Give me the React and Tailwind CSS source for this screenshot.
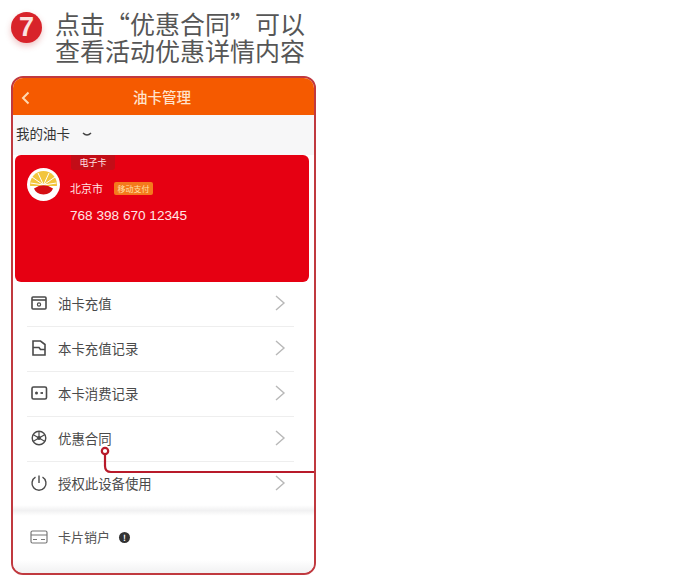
import React from "react";

const cjk = { fontFamily: '"Noto Sans CJK SC","Liberation Sans",sans-serif' };

const Chevron = () => (
  <svg width="12" height="18" viewBox="0 0 12 18" fill="none" className="ml-auto mr-[8px] shrink-0">
    <path d="M2 2 L10 9 L2 16" stroke="#b8b8b8" strokeWidth="1.4" />
  </svg>
);

const IconWallet = () => (
  <svg width="18" height="18" viewBox="0 0 18 18" fill="none" stroke="#4a4a4a" strokeWidth="1.6">
    <rect x="2" y="3" width="14" height="12" rx="1" />
    <path d="M2 6 H16" />
    <circle cx="9" cy="10.5" r="1.6" strokeWidth="1.2" />
  </svg>
);
const IconDoc = () => (
  <svg width="18" height="18" viewBox="0 0 18 18" fill="none" stroke="#4a4a4a" strokeWidth="1.6">
    <path d="M3 2 H10.5 L15 5.5 V16 H3 Z" />
    <path d="M3 8.5 H9 L10.5 10.5 H15" />
  </svg>
);
const IconBill = () => (
  <svg width="18" height="18" viewBox="0 0 18 18" fill="none" stroke="#4a4a4a" strokeWidth="1.6">
    <rect x="2" y="3" width="14.5" height="12" rx="1.5" />
    <circle cx="6.5" cy="9" r="1.5" fill="#4a4a4a" stroke="none" />
    <path d="M10.5 9 H13" strokeWidth="1.8" />
  </svg>
);
const IconFlower = () => (
  <svg width="18" height="18" viewBox="0 0 18 18" fill="none" stroke="#4a4a4a" strokeWidth="1.4">
    <circle cx="9" cy="9" r="6.8" />
    <circle cx="9" cy="9" r="2" fill="#4a4a4a" stroke="none" />
    <path d="M9 2.2 L9 9 L15 12.5 M9 9 L3 12.5 M3 5.5 L9 9 L15 5.5" strokeWidth="1.2" />
  </svg>
);
const IconPower = () => (
  <svg width="18" height="18" viewBox="0 0 18 18" fill="none" stroke="#4a4a4a" strokeWidth="1.4">
    <path d="M5.5 3.2 A7 7 0 1 0 12.5 3.2" />
    <path d="M9 1.5 V9" />
  </svg>
);
const IconCard = () => (
  <svg width="18" height="14" viewBox="0 0 18 14" fill="none" stroke="#777" strokeWidth="1.2">
    <rect x="1" y="1" width="16" height="12" rx="1.5" />
    <path d="M1 5 H17" />
    <path d="M3 9.5 H7 M11 9.5 H15" />
  </svg>
);

const Logo = () => (
  <svg width="33" height="33" viewBox="0 0 33 33" className="shrink-0">
    <circle cx="16.5" cy="16.5" r="16.5" fill="#fff" />
    <circle cx="16.5" cy="16.5" r="13.5" fill="#f2c53d" />
    <path d="M16.5 17 L11 5 M16.5 17 L22 5 M16.5 17 L5 9 M16.5 17 L28 9 M16.5 17 L3.5 15 M16.5 17 L29.5 15" stroke="#fff" strokeWidth="1" />
    <path d="M3 18 H30 A13.5 13.5 0 0 1 3 18 Z" fill="#fff" />
    <path d="M7 20.5 Q16.5 14 26 20.5 Q24 26 16.5 26.5 Q9 26 7 20.5 Z" fill="#d40f14" />
  </svg>
);

const rows = [
  [IconWallet, "油卡充值"],
  [IconDoc, "本卡充值记录"],
  [IconBill, "本卡消费记录"],
  [IconFlower, "优惠合同"],
  [IconPower, "授权此设备使用"],
];

export default function App() {
  return (
    <div className="w-[673px] h-[585px] bg-white overflow-hidden pl-[11px] pt-[10px]" style={cjk}>
      <div className="flex items-start h-[66px]">
        <div className="mt-[2px] w-[31px] h-[31px] rounded-full bg-[#d8232a] text-[#fbe4e0] flex items-center justify-center text-[27px] font-bold leading-none shadow-[0_3px_6px_rgba(200,60,60,0.3)]" style={{ fontFamily: '"Liberation Sans",sans-serif' }}>7</div>
        <div className="ml-[13px] text-[25px] leading-[27px] text-[#565656] w-[260px] whitespace-nowrap">
          <div>点击“优惠合同”可以</div>
          <div>查看活动优惠详情内容</div>
        </div>
      </div>

      <div className="relative w-[305px] h-[499px] border-2 border-[#c0393f] rounded-[12px] overflow-hidden bg-white flex flex-col">
        <div className="relative h-[37px] shrink-0 bg-[#f55a00] flex items-center justify-center pr-[3px]">
          <svg width="10" height="14" viewBox="0 0 10 14" fill="none" className="absolute left-[8px] top-[13px]">
            <path d="M7.5 1.5 L2 7 L7.5 12.5" stroke="#ffd9b0" strokeWidth="2" />
          </svg>
          <span className="text-[14.5px] font-medium text-[#ffe3cc]">油卡管理</span>
        </div>

        <div className="h-[40px] shrink-0 bg-[#f7f7f8] flex items-center pl-[3px] text-[13.5px] text-[#333] pb-[3px]">
          <span>我的油卡</span>
          <svg width="10" height="6" viewBox="0 0 10 6" fill="none" className="ml-[12px] mt-[3px]">
            <path d="M1 1 Q5 5 9 1" stroke="#444" strokeWidth="1.5" />
          </svg>
        </div>

        <div className="relative ml-[2px] mr-[5px] h-[127px] shrink-0 rounded-[6px] bg-[#e60012] pl-[12px] pt-[13px]">
          <div className="absolute left-[56px] top-0 w-[44px] h-[15px] bg-[#c30d17] rounded-b-[3px] text-[9px] leading-[15px] text-center text-[#ffe3e3]">电子卡</div>
          <div className="flex">
            <Logo />
            <div className="ml-[10px] pt-[12px]">
              <div className="flex items-center h-[16px]">
                <span className="text-[11px] text-[#ffe3e3]">北京市</span>
                <span className="ml-[11px] w-[39px] h-[13px] bg-[#f47a1c] rounded-[2px] text-[8px] leading-[13px] text-center text-[#ffe0a8]">移动支付</span>
              </div>
              <div className="mt-[12px] text-[13.6px] leading-[16px] text-[#ffe6e6] whitespace-nowrap" style={{ fontFamily: '"Liberation Sans",sans-serif' }}>768 398 670 12345</div>
            </div>
          </div>
        </div>

        <div className="pl-[14px] pr-[20px] shrink-0">
          {rows.map(([Icon, label], i) => (
            <div key={label} className={i < 4 ? "flex items-center pl-[3px] h-[45px] pb-[2px] border-b border-[#eeeeee]" : "flex items-center pl-[3px] h-[43px] pb-[1px]"}>
              <span className="w-[18px] flex justify-center shrink-0"><Icon /></span>
              <span className="ml-[10px] text-[13.4px] text-[#4a4a4a]">{label}</span>
              <Chevron />
            </div>
          ))}
        </div>

        <div className="h-[11px] shrink-0 bg-gradient-to-b from-white via-[#f1f1f2] to-white" />
        <div className="flex items-center pl-[17px] h-[44px] pb-[2px] shrink-0">
          <IconCard />
          <span className="ml-[10px] text-[13px] text-[#555]">卡片销户</span>
          <span className="ml-[9px] w-[11px] h-[11px] rounded-full bg-[#333] text-white text-[8px] leading-[11px] text-center font-bold">!</span>
        </div>
        <div className="flex-1 bg-gradient-to-b from-white to-[#f1f1f2]" />

        <svg width="225" height="30" viewBox="0 0 225 30" fill="none" className="absolute left-[86px] top-[368px]">
          <circle cx="6" cy="5" r="3.2" fill="#fff" stroke="#b81a2a" strokeWidth="2.2" />
          <path d="M6 8 V20 Q6 26 12 26 H225" stroke="#b81a2a" strokeWidth="2.2" />
        </svg>
      </div>
    </div>
  );
}
